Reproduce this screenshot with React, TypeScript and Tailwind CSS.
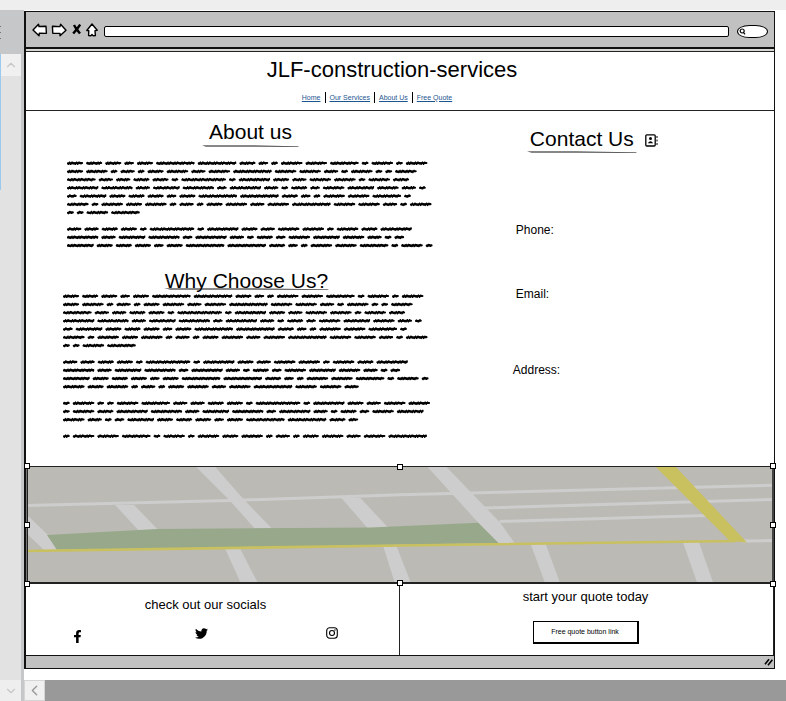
import React from "react";
import { FaFacebookF, FaTwitter } from "react-icons/fa";
import { ChevronDown, ChevronLeft, ChevronUp } from "lucide-react";

const OPENING = [
  "Lorem ipsum dolor sit amet, consectetur adipisicing elit, sed do eiusmod tempor incididunt ut labore et dolore",
  "magna aliqua. Ut enim ad minim veniam, quis nostrud exercitation ullamco laboris nisi ut aliquip ex ea commodo",
  "consequat. Duis aute irure dolor in reprehenderit in voluptate velit esse cillum dolore eu fugiat nulla",
  "pariatur. Excepteur sint occaecat cupidatat non proident, sunt in culpa qui officia deserunt mollit anim id",
  "est laborum. Lorem ipsum dolor sit amet, consectetur adipisicing elit, sed do eiusmod tempor incididunt ut",
  "labore et dolore magna aliqua. Ut enim ad minim veniam, quis nostrud exercitation ullamco laboris nisi ut aliquip",
  "ex ea commodo consequat.",
  "",
  "Duis aute irure dolor in reprehenderit in voluptate velit esse cillum dolore eu fugiat nulla pariatur.",
  "Excepteur sint occaecat cupidatat non proident, sunt in culpa qui officia deserunt mollit anim id est",
  "laborum. Lorem ipsum dolor sit amet, consectetur adipisicing elit, sed do eiusmod tempor incididunt ut labore et",
];

const CLOSING = [
  "dolore magna aliqua. Ut enim ad minim veniam, quis nostrud exercitation ullamco laboris nisi",
  "",
  "ut aliquip ex ea commodo consequat. Duis aute irure dolor in reprehenderit in voluptate velit esse cillum dolore",
  "eu fugiat nulla pariatur. Excepteur sint occaecat cupidatat non proident, sunt in culpa qui officia deserunt",
  "mollit anim id est laborum. Lorem ipsum dolor sit amet, consectetur adipisicing elit, sed",
  "",
  "do eiusmod tempor incididunt ut labore et dolore magna aliqua. Ut enim ad minim veniam, quis nostrud exercitation",
];

// Advance of a scribbled word by its letter count, in thirds of a pixel.
const ADVANCE: Record<number, number> = {
  2: 29.3, 3: 38, 4: 52, 5: 57.3, 6: 73.7, 7: 73.7, 8: 89, 9: 103, 10: 95, 11: 125, 12: 125, 13: 143,
};
const PITCH = 24.7;

function scribble(lines: string[]) {
  let bars = "";
  let bumps = "";
  lines.forEach((line, row) => {
    let x = 0;
    const y = row * PITCH + 9;
    line.split(" ").filter(Boolean).forEach((word) => {
      const adv = ADVANCE[word.length];
      const end = x + adv - 9;
      bars += `M${x + 3} ${y + 1}L${end - 3} ${y}`;
      let i = word.charCodeAt(0);
      for (let p = x + 4; p < end - 5; p += 7) {
        bumps += i % 3 ? `M${p} ${y + 4}l4 -7` : `M${p} ${y - 2}l3 5`;
        i += 1;
      }
      x += adv;
    });
  });
  return { bars, bumps };
}

function Scribble({ lines, className }: { lines: string[]; className: string }) {
  const { bars, bumps } = scribble(lines);
  const height = Math.round(((lines.length - 1) * PITCH + 18) / 3);
  return (
    <svg aria-hidden="true" width="372" height={height} viewBox={`0 0 1116 ${height * 3}`} className={`max-w-full ${className}`} stroke="#000" fill="none" strokeLinecap="round">
      <path d={bars} strokeWidth="6.4" />
      <path d={bumps} strokeWidth="4" />
    </svg>
  );
}

function Rule({ className }: { className: string }) {
  return (
    <svg aria-hidden="true" viewBox="0 0 100 3" preserveAspectRatio="none" className={`h-[3px] ${className}`}>
      <path d="M0 0.4L45 0.4L100 1.2L99 1.8L45 1.5L4 1.4Z" fill="#111" />
    </svg>
  );
}

function Toolbar() {
  const btn = "flex h-5 items-center justify-center";
  return (
    <div className="flex h-[37px] items-center border-b-2 border-[#111] bg-[#c1c1c1] pr-[6px] pl-[5px]">
      <button aria-label="Back" className={`${btn} w-[17px]`}>
        <svg width="16" height="14" viewBox="0 0 16 14" fill="#fff" stroke="#000" strokeWidth="1.4" strokeLinejoin="round"><path d="M1 7L6.5 1.2L7 3.5L14 3.2L14.4 10.4L7.3 10.2L7 12.8Z" /></svg>
      </button>
      <button aria-label="Forward" className={`${btn} ml-[2px] w-[17px]`}>
        <svg width="16" height="14" viewBox="0 0 16 14" fill="#fff" stroke="#000" strokeWidth="1.4" strokeLinejoin="round"><path d="M15 7.2L9.6 1.2L9 3.6L1.4 3.2L1.8 10.3L9 10.4L9 12.8Z" /></svg>
      </button>
      <button aria-label="Stop" className={`${btn} ml-[5px] w-[10px]`}>
        <svg width="10" height="12" viewBox="0 0 10 12" fill="none" stroke="#000" strokeWidth="2.4"><path d="M2 1L4.4 5L8 9.6M8.2 0.6L5 5L1.2 9.6" /><path d="M3.2 5H6.2" strokeWidth="3" /></svg>
      </button>
      <button aria-label="Home" className={`${btn} ml-[4px] w-[12px]`}>
        <svg width="12" height="14" viewBox="0 0 12 14" fill="#fff" stroke="#000" strokeWidth="1.4" strokeLinejoin="round"><path d="M6 1L11.2 7.3L9 7.6L9.4 12.6L7.2 12.7L6 11.6L4.8 12.8L2.6 12.6L2.8 7.6L0.8 7.5Z" /></svg>
      </button>
      <input aria-label="Address" className="mt-[4px] ml-[6px] h-[11px] min-w-0 flex-1 rounded-[2px] border border-black bg-white px-1 text-[8px] outline-none" />
      <div className="relative mt-[3px] ml-[8px] h-[13px] w-[31px]">
        <input aria-label="Search" className="block h-full w-full rounded-[40%/50%] border border-black bg-white pl-3 text-[8px] outline-none" />
        <svg className="absolute top-[3px] left-[2px]" width="7" height="7" viewBox="0 0 7 7" fill="none" stroke="#000" strokeWidth="1.2"><circle cx="3.2" cy="3" r="2" /><path d="M4.2 4.2L6 6.4" /></svg>
      </div>
    </div>
  );
}

function Handle({ className }: { className: string }) {
  return <span className={`absolute h-[6px] w-[6px] border border-black bg-white ${className}`} />;
}

function MapView() {
  return (
    <section aria-label="Map" className="relative h-[118px] border-t border-b-2 border-[#222] bg-[#bbbab5]">
      <svg className="block h-full w-full" viewBox="26 467 747 115" preserveAspectRatio="none">
        <g fill="#cdcdcd">
          <path d="M196 467L215 467L244 500L271 528L254 528L229 500Z" />
          <path d="M115 505L134 505L158 530L138 530Z" />
          <path d="M341 498L360 498L388 528L367 528Z" />
          <path d="M26 514L47 534L57 550L44 550L26 533Z" />
          <path d="M225 549L240 549L257 582L240 582Z" />
          <path d="M383 547L396 546L410 582L394 582Z" />
          <path d="M530 544L545 544L559 582L544 582Z" />
          <path d="M682 542L698 542L712 582L696 582Z" />
        </g>
        <g fill="none" stroke="#cdcdcd" strokeWidth="3">
          <path d="M26 505.5L230 500.5L400 494.7L773 485.2M484 508L773 499.5M499 521.4L706 515.5M742 541L773 540.6" />
        </g>
        <path d="M47 535L157 529L370 527.5L478 522.7L498 543L57 550Z" fill="#97a98a" />
        <path d="M427 467L446 467L499 522L514 543L498 543L478 523Z" fill="#cdcdcd" />
        <path d="M26 551L400 545.5L735 541" fill="none" stroke="#c9c05f" strokeWidth="2.6" />
        <path d="M655 467L675 467L746 542.5L729 541Z" fill="#c9c05f" />
      </svg>
      <span className="absolute inset-y-0 left-0 w-[2px] border-r border-[#222] bg-[#777]" />
      <span className="absolute inset-y-0 right-0 w-[2px] bg-[#444]" />
      <Handle className="top-[-4px] left-[-2px]" />
      <Handle className="top-[-3px] left-[371px]" />
      <Handle className="top-[-4px] right-[-2px]" />
      <Handle className="top-[55px] left-[-2px]" />
      <Handle className="top-[55px] right-[-2px]" />
      <Handle className="bottom-[-5px] left-[-2px]" />
      <Handle className="bottom-[-4px] left-[371px]" />
      <Handle className="right-[-2px] bottom-[-5px]" />
    </section>
  );
}

function NavLink({ children, last = false }: { children: React.ReactNode; last?: boolean }) {
  return (
    <li className="flex items-center">
      <a href="#top" className="text-[7px] leading-[10px] text-[#1d5591] underline">{children}</a>
      {!last && <span className="mx-[4px] h-[11px] w-px bg-black" />}
    </li>
  );
}

export default function App() {
  return (
    <div id="top" className="flex min-h-screen flex-col bg-white font-['Liberation_Sans',Arial,sans-serif] text-black">
      <div className="h-[10px] bg-[#eeeeee]" />
      <div className="flex flex-1">
        <aside className="flex w-[24px] shrink-0 flex-col bg-[#c6c7c8]">
          <div className="flex h-[44px] flex-col justify-center gap-[5px]">
            <span className="h-px w-px bg-[#777]" />
            <span className="h-px w-px bg-[#777]" />
            <span className="h-px w-px bg-[#777]" />
          </div>
          <div className="flex w-[21px] flex-1 flex-col bg-[#e2e2e2]">
            <div className="flex h-[136px] border-l border-[#9cc9ee]">
              <button aria-label="Scroll up" className="flex h-[22px] w-full items-center justify-center bg-[#f0f0f0] text-[#c6c6c6]"><ChevronUp size={14} /></button>
            </div>
            <button aria-label="Scroll down" className="mt-auto flex h-[21px] items-center justify-center bg-[#eeeeee] text-[#c6c6c6]"><ChevronDown size={14} /></button>
          </div>
        </aside>
        <div className="flex min-w-0 flex-1 flex-col">
          <div className="mt-px mr-[11px] border border-l-2 border-[#111]">
            <Toolbar />
            <div className="h-[2px] bg-[#d8d8d4]" />
            <header className="flex h-[60px] flex-col items-center border-y border-[#222] pt-[4px]">
              <h1 className="pr-4 text-[22px] leading-[28px]">JLF-construction-services</h1>
              <nav className="mt-[8px] pr-[46px]">
                <ul className="flex">
                  <NavLink>Home</NavLink>
                  <NavLink>Our Services</NavLink>
                  <NavLink>About Us</NavLink>
                  <NavLink last>Free Quote</NavLink>
                </ul>
              </nav>
            </header>
            <main className="flex pb-[27px]">
              <div className="flex w-3/5 flex-col pl-[37px]">
                <section className="flex flex-col pl-1">
                  <div className="flex w-[367px] flex-col items-center pt-2">
                    <h2 className="text-[21px] leading-[26px]">About us</h2>
                    <Rule className="w-[97px]" />
                  </div>
                  <Scribble lines={OPENING} className="mt-[12px]" />
                </section>
                <section className="flex flex-col pt-[20px]">
                  <div className="flex w-[367px] flex-col items-center">
                    <h2 className="text-[21px] leading-[26px]">Why Choose Us?</h2>
                    <Rule className="-mt-[6px] w-[165px]" />
                  </div>
                  <Scribble lines={[...OPENING, ...CLOSING]} className="mt-[2px]" />
                </section>
              </div>
              <section className="flex flex-1 flex-col pt-4 pl-[38px] text-[12px] leading-[16px]">
                <div className="flex items-start gap-2 pl-[14px]">
                  <div className="flex flex-col items-center">
                    <h2 className="text-[21px] leading-[24px]">Contact Us</h2>
                    <Rule className="w-[110px]" />
                  </div>
                  <svg className="mt-[7px]" width="13" height="13" viewBox="0 0 13 13" fill="none" stroke="#000" strokeWidth="1.3"><rect x="0.8" y="0.8" width="9.4" height="11.2" rx="1" /><circle cx="5.5" cy="4.6" r="1.5" fill="#000" stroke="none" /><path d="M2.8 9.2Q5.5 5.2 8.2 9.2Z" fill="#000" stroke="none" /><path d="M12 2V4M12 5.5V7.5M12 9V11" strokeWidth="1" /></svg>
                </div>
                <p className="mt-[68px] pl-[3px]">Phone:</p>
                <p className="mt-12 pl-[3px]">Email:</p>
                <p className="mt-[60px]">Address:</p>
              </section>
            </main>
            <MapView />
            <footer className="flex h-[71px]">
              <section className="w-1/2 border-r border-[#222] pt-[13px]">
                <h2 className="pr-[14px] text-center text-[13px] leading-[16px]">check out our socials</h2>
                <div className="mt-[14px] flex items-start justify-between pr-[61px] pl-[45px]">
                  <a href="#facebook" aria-label="Facebook" className="mt-[3px]"><FaFacebookF size={13} /></a>
                  <a href="#twitter" aria-label="Twitter" className="mr-2"><FaTwitter size={13} /></a>
                  <a href="#instagram" aria-label="Instagram"><svg width="12" height="12" viewBox="0 0 12 12" fill="none" stroke="#000" strokeWidth="1.1"><rect x="0.7" y="0.7" width="10.6" height="10.6" rx="3" /><circle cx="6" cy="6" r="2.5" /><circle cx="9" cy="3" r="0.7" fill="#000" stroke="none" /></svg></a>
                </div>
              </section>
              <section className="flex flex-1 flex-col items-center border-r border-[#222] pt-[5px] pr-[2px]">
                <h2 className="text-[13px] leading-[16px]">start your quote today</h2>
                <button className="mt-[16px] h-[23px] w-[106px] border border-r-2 border-b-2 border-black text-[7px] leading-[10px]">Free quote button link</button>
              </section>
            </footer>
            <div className="flex h-[13px] items-center justify-end border-t border-[#111] bg-[#c1c1c1] pr-px">
              <svg width="9" height="8" viewBox="0 0 9 8" stroke="#000" strokeWidth="1.6"><path d="M1 6.2L5 1.2M4 7.2L8.4 1.8" /></svg>
            </div>
          </div>
          <div className="mt-auto flex h-[21px] bg-[#999999]">
            <button aria-label="Scroll left" className="flex w-[21px] items-center justify-center border border-[#d5d5d5] bg-[#f0f0f0] text-[#999]"><ChevronLeft size={17} /></button>
          </div>
        </div>
      </div>
    </div>
  );
}
